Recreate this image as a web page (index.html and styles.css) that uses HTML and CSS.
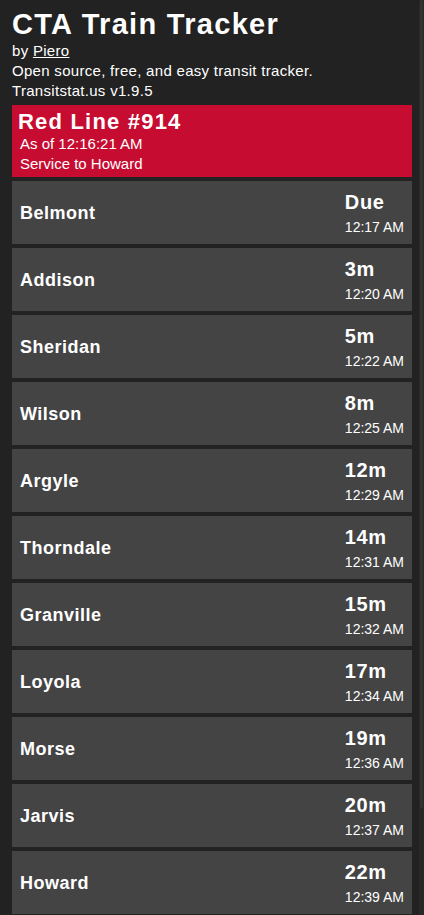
FILE: index.html
```html
<!DOCTYPE html>
<html lang="en">
<head>
<meta charset="utf-8">
<title>CTA Train Tracker</title>
<link rel="stylesheet" href="styles.css">
</head>
<body>
<main class="page">
  <header class="intro">
    <h1 class="title">CTA Train Tracker</h1>
    <p class="line">by <a class="link" href="#">Piero</a></p>
    <p class="line">Open source, free, and easy transit tracker.</p>
    <p class="line">Transitstat.us v1.9.5</p>
  </header>
  <section class="train">
    <h2 class="train-name">Red Line #914</h2>
    <p class="train-sub">As of 12:16:21 AM</p>
    <p class="train-sub">Service to Howard</p>
  </section>
  <ul class="stops">
    <li class="stop"><span class="stop-name">Belmont</span><span class="eta"><span class="eta-big">Due</span><span class="eta-time">12:17 AM</span></span></li>
    <li class="stop"><span class="stop-name">Addison</span><span class="eta"><span class="eta-big">3m</span><span class="eta-time">12:20 AM</span></span></li>
    <li class="stop"><span class="stop-name">Sheridan</span><span class="eta"><span class="eta-big">5m</span><span class="eta-time">12:22 AM</span></span></li>
    <li class="stop"><span class="stop-name">Wilson</span><span class="eta"><span class="eta-big">8m</span><span class="eta-time">12:25 AM</span></span></li>
    <li class="stop"><span class="stop-name">Argyle</span><span class="eta"><span class="eta-big">12m</span><span class="eta-time">12:29 AM</span></span></li>
    <li class="stop"><span class="stop-name">Thorndale</span><span class="eta"><span class="eta-big">14m</span><span class="eta-time">12:31 AM</span></span></li>
    <li class="stop"><span class="stop-name">Granville</span><span class="eta"><span class="eta-big">15m</span><span class="eta-time">12:32 AM</span></span></li>
    <li class="stop"><span class="stop-name">Loyola</span><span class="eta"><span class="eta-big">17m</span><span class="eta-time">12:34 AM</span></span></li>
    <li class="stop"><span class="stop-name">Morse</span><span class="eta"><span class="eta-big">19m</span><span class="eta-time">12:36 AM</span></span></li>
    <li class="stop"><span class="stop-name">Jarvis</span><span class="eta"><span class="eta-big">20m</span><span class="eta-time">12:37 AM</span></span></li>
    <li class="stop"><span class="stop-name">Howard</span><span class="eta"><span class="eta-big">22m</span><span class="eta-time">12:39 AM</span></span></li>
  </ul>
</main>
<div class="scroll-track"><div class="scroll-thumb"></div></div>
</body>
</html>
```
FILE: styles.css
```css
html, body {
  margin: 0;
  padding: 0;
  background: #222222;
  color: #ffffff;
  font-family: "Liberation Sans", Arial, sans-serif;
}

.page {
  padding: 7px 12px 12px;
}

.intro {
  display: flex;
  flex-direction: column;
}

.title {
  margin: 0;
  font-size: 29px;
  line-height: 34px;
  font-weight: 700;
  letter-spacing: 1.3px;
}

.line {
  margin: 0;
  font-size: 15px;
  line-height: 20px;
  letter-spacing: 0.3px;
}

.link {
  color: #ffffff;
  text-decoration: underline;
}

.train {
  margin-top: 4px;
  background: #c60c30;
  padding: 5px 5px 3px 6px;
}

.train-name {
  margin: 0;
  font-size: 22px;
  line-height: 24px;
  font-weight: 700;
  letter-spacing: 1.2px;
}

.train-sub {
  margin: 0 0 0 2px;
  font-size: 15px;
  line-height: 20px;
}

.stops {
  list-style: none;
  margin: 4px 0 0;
  padding: 0;
  display: flex;
  flex-direction: column;
  gap: 4px;
}

.stop {
  display: flex;
  align-items: center;
  justify-content: space-between;
  background: #444444;
  padding: 8px 8px 8px 8px;
}

.stop-name {
  font-size: 18px;
  line-height: 22px;
  font-weight: 700;
  letter-spacing: 0.5px;
}

.eta {
  display: flex;
  flex-direction: column;
  align-items: flex-start;
}

.eta-big {
  font-size: 20px;
  line-height: 26px;
  font-weight: 700;
  letter-spacing: 0.6px;
}

.eta-time {
  margin-top: 3px;
  font-size: 14px;
  line-height: 18px;
}

.scroll-track {
  position: fixed;
  top: 0;
  right: 0;
  width: 5px;
  height: 100%;
  background: #282828;
}

.scroll-thumb {
  width: 3px;
  height: 808px;
  margin-left: 1px;
  border-radius: 2px;
  background: #333333;
}
```
